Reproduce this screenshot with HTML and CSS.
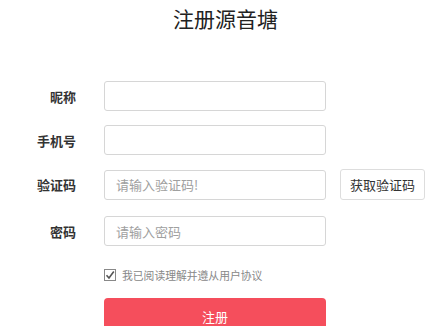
FILE: index.html
```html
<!DOCTYPE html>
<html lang="zh">
<head>
    <meta charset="UTF-8">
    <meta name="viewport" content="width=device-width, initial-scale=1.0">
    <title>注册源音塘</title>
    <link rel="stylesheet" href="styles.css">
</head>
<body>
    <div id="register">
        <h1>注册源音塘</h1>

        <div class="row row-first">
            <label class="label">昵称</label>
            <input class="field" type="text">
        </div>
        <div class="row">
            <label class="label">手机号</label>
            <input class="field" type="text">
        </div>
        <div class="row">
            <label class="label">验证码</label>
            <input class="field" type="text" placeholder="请输入验证码!">
            <button class="code-btn">获取验证码</button>
        </div>
        <div class="row row-pwd">
            <label class="label">密码</label>
            <input class="field" type="password" placeholder="请输入密码">
        </div>

        <div class="agree">
            <span class="check">
                <svg width="10" height="10" viewBox="0 0 10 10"><path d="M1.5 5.2 L4 8 L8.8 1.6" fill="none" stroke="#555" stroke-width="1.6"/></svg>
            </span>
            <span class="agree-text">我已阅读理解并遵从用户协议</span>
        </div>

        <button class="submit">注册</button>
    </div>
</body>
</html>
```

FILE: styles.css
```css
body {
    margin: 0;
    background-color: #fff;
    font-family: "Microsoft YaHei", "Noto Sans CJK SC", sans-serif;
    overflow: hidden;
}
#register {
    width: 438px;
}
h1 {
    margin: 0;
    padding: 3px 0 0 13px;
    text-align: center;
    font-size: 21px;
    font-weight: normal;
    color: #222;
    line-height: 30px;
}
.row {
    display: flex;
    align-items: center;
    margin-top: 14px;
}
.row-first {
    margin-top: 48px;
}
.row-pwd {
    margin-top: 16px;
}
.label {
    width: 76px;
    text-align: right;
    font-size: 13px;
    font-weight: bold;
    color: #333;
    margin-right: 28px;
}
.field {
    box-sizing: border-box;
    width: 222px;
    height: 30px;
    border: 1px solid #d6d6d6;
    border-radius: 3px;
    padding: 0 11px;
    font-size: 13px;
    font-family: inherit;
    outline: none;
}
.field::placeholder {
    color: #a0a0a0;
}
.code-btn {
    box-sizing: border-box;
    margin-left: 14px;
    width: 85px;
    height: 31px;
    background-color: #fff;
    border: 1px solid #ddd;
    border-radius: 3px;
    font-size: 13px;
    font-family: inherit;
    color: #333;
    padding: 0;
}
.agree {
    display: flex;
    align-items: center;
    margin: 22px 0 0 104px;
    height: 14px;
}
.check {
    box-sizing: border-box;
    width: 12px;
    height: 12px;
    border: 1px solid #888;
    display: flex;
    align-items: center;
    justify-content: center;
    margin-right: 6px;
}
.agree-text {
    font-size: 10.8px;
    color: #888;
}
.submit {
    display: block;
    margin: 16px 0 0 104px;
    width: 222px;
    height: 36px;
    border: none;
    border-radius: 4px;
    background-color: #f54e5c;
    color: #fff;
    font-size: 13px;
    font-family: inherit;
}
```
